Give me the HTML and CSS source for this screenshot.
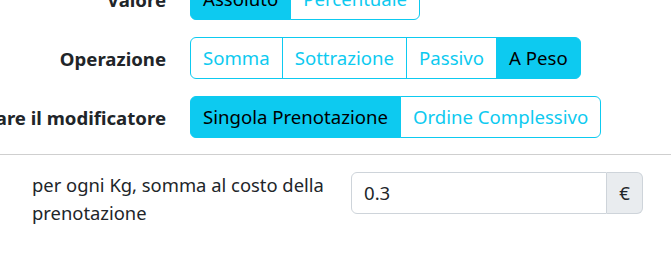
FILE: index.html
```html
<!DOCTYPE html>
<html lang="it">
<head>
    <meta charset="UTF-8">
    <meta name="viewport" content="width=device-width, initial-scale=1.0">
    <title>Modificatore</title>
    <link rel="stylesheet" href="styles.css">
</head>
<body>
    <div class="options">
        <div class="form-row">
            <div class="row-label"><span>Valore</span></div>
            <div class="btn-group">
                <button class="btn active">Assoluto</button>
                <button class="btn">Percentuale</button>
            </div>
        </div>
        <div class="form-row">
            <div class="row-label"><span>Operazione</span></div>
            <div class="btn-group">
                <button class="btn">Somma</button>
                <button class="btn">Sottrazione</button>
                <button class="btn">Passivo</button>
                <button class="btn active">A Peso</button>
            </div>
        </div>
        <div class="form-row">
            <div class="row-label"><span>Applicare il modificatore</span></div>
            <div class="btn-group">
                <button class="btn active">Singola Prenotazione</button>
                <button class="btn">Ordine Complessivo</button>
            </div>
        </div>
    </div>
    <hr class="divider">
    <div class="value-row">
        <label class="value-label" for="amount">per ogni Kg, somma al costo della prenotazione</label>
        <div class="input-group">
            <input class="field" id="amount" type="text" value="0.3">
            <span class="addon">€</span>
        </div>
    </div>
</body>
</html>
```

FILE: styles.css
```css
body {
    font-family: "Noto Sans", sans-serif;
    font-size: 18.6px;
    color: #212529;
    margin: 0;
    padding: 0;
    background: #fff;
    overflow: hidden;
}
.options {
    margin-top: -22px;
    display: flex;
    flex-direction: column;
    gap: 17px;
}
.form-row {
    display: flex;
    align-items: center;
    gap: 24px;
}
.row-label {
    width: 166px;
    flex-shrink: 0;
    display: flex;
    justify-content: flex-end;
    white-space: nowrap;
    font-weight: bold;
}
.btn-group {
    display: flex;
}
.btn {
    font-family: inherit;
    font-size: 18.6px;
    line-height: 24px;
    padding: 8px 12px;
    margin: 0;
    background: #fff;
    color: #0dcaf0;
    border: 1px solid #0dcaf0;
    border-radius: 0;
    cursor: pointer;
}
.btn + .btn {
    margin-left: -1px;
}
.btn:first-child {
    border-radius: 6px 0 0 6px;
}
.btn:last-child {
    border-radius: 0 6px 6px 0;
}
.btn.active {
    background: #0dcaf0;
    color: #000;
}
.divider {
    border: 0;
    border-top: 1px solid #cfcfcf;
    margin: 16px 0 0;
}
.value-row {
    display: flex;
    align-items: flex-start;
    gap: 24px;
    padding: 17px 0 0 32px;
}
.value-label {
    width: 295px;
    font-size: 18.4px;
    line-height: 28px;
    margin-top: -1px;
}
.input-group {
    display: flex;
    width: 292px;
}
.field {
    flex: 1;
    min-width: 0;
    font-family: inherit;
    font-size: 18.6px;
    line-height: 24px;
    padding: 8px 12px;
    color: #212529;
    border: 1px solid #ced4da;
    border-radius: 6px 0 0 6px;
    outline: none;
}
.addon {
    display: flex;
    align-items: center;
    padding: 8px 12px;
    line-height: 24px;
    background: #e9ecef;
    border: 1px solid #ced4da;
    border-left: 0;
    border-radius: 0 6px 6px 0;
}
```
